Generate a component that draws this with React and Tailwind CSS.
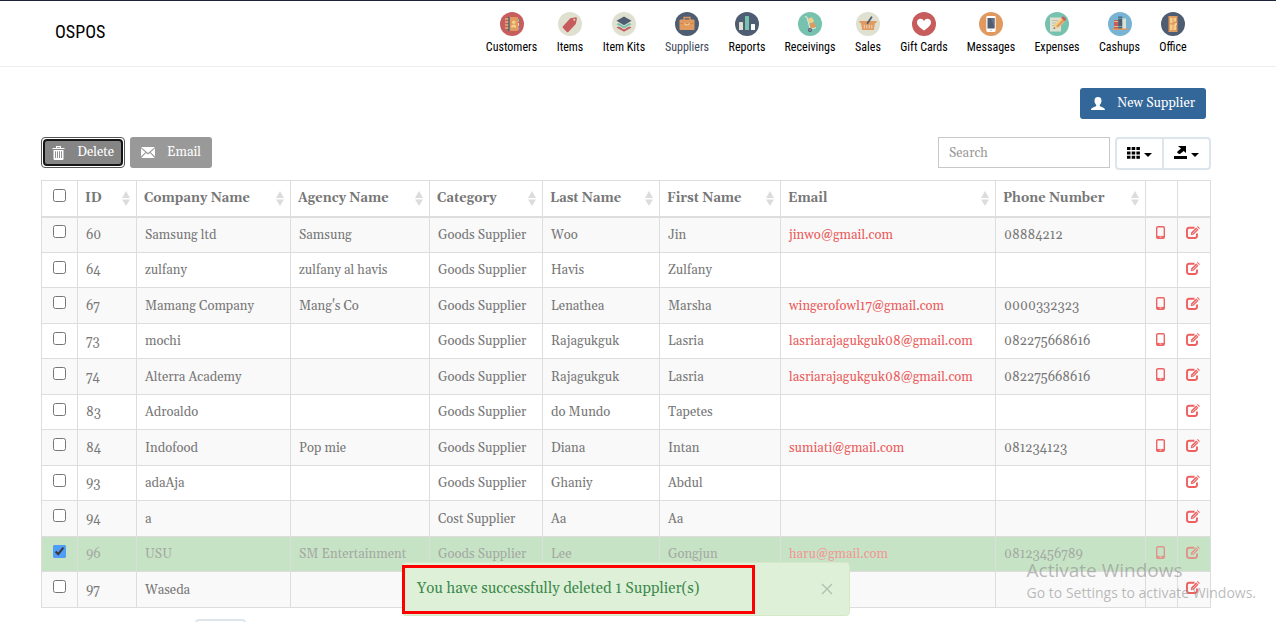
import React, { useState } from "react";

function Disc({ color, children }) {
  return (
    <svg viewBox="0 0 24 24" className="block size-6" aria-hidden="true">
      <circle cx="12" cy="12" r="12" fill={color} />
      {children}
    </svg>
  );
}

const icons = {
  customers: (
    <Disc color="#c85d5d">
      <rect x="17" y="7" width="2" height="3" fill="#76c2af" />
      <rect x="17" y="11" width="2" height="3" fill="#e0e0d1" />
      <rect x="17" y="15" width="2" height="3" fill="#77b3d4" />
      <rect x="7" y="5" width="11" height="14" rx="1" fill="#e0995e" />
      <rect x="7.500" y="5" width="2.200" height="14" fill="#4f5d73" />
      <path d="M5 7h3.500M5 10h3.500M5 13h3.500M5 16h3.500" stroke="#f5cf87" strokeWidth="1.200" />
      <circle cx="13.800" cy="10.200" r="1.800" fill="#f5cf87" />
      <path d="M11 15.500c0-4 5.500-4 5.500 0z" fill="#f5cf87" />
    </Disc>
  ),
  items: (
    <Disc color="#e0e0d1">
      <path d="M5 14.200 12.300 6.300l5.900-1.100.8 1-1.200 5.700-7.500 8q-.8.6-1.500 0L5 16q-.8-.9 0-1.800z" fill="#c75c5c" />
      <circle cx="16.300" cy="7.800" r="1" fill="#e0e0d1" />
    </Disc>
  ),
  kits: (
    <Disc color="#e0e0d1">
      <path d="m4.500 15.500 7.500-4 7.500 4-7.500 4.300z" fill="#c75c5c" />
      <path d="m4.500 13.200 7.500-4.500 7.500 4.500-7.500 4.300z" fill="#e0e0d1" />
      <path d="m4.500 12.300 7.500-4.300 7.500 4.300L12 16.600z" fill="#76c2af" />
      <path d="M4.500 9.700 12 5.300l7.500 4.400L12 14.200z" fill="#e0e0d1" />
      <path d="M4.500 8.800 12 4.400l7.500 4.400L12 13.200z" fill="#4f5d73" />
    </Disc>
  ),
  suppliers: (
    <Disc color="#4f5d73">
      <path d="M9 8V5.500h6V8" fill="none" stroke="#e0995e" strokeWidth="1.300" />
      <rect x="4.500" y="7.500" width="15" height="10.500" rx="1" fill="#e0995e" />
      <path d="M4.500 11.500h15" stroke="#c88248" strokeWidth=".7" />
      <path d="M9.500 11.200q.5 1.800 2.500 1.800t2.500-1.800" fill="none" stroke="#f5cf87" strokeWidth="1.200" />
    </Disc>
  ),
  reports: (
    <Disc color="#4f5d73">
      <rect x="4" y="10" width="4" height="8" rx=".6" fill="#e0e0d1" />
      <rect x="10" y="4" width="4" height="14" rx=".6" fill="#76c2af" />
      <rect x="16" y="12" width="4" height="6" rx=".6" fill="#fff" />
    </Disc>
  ),
  receivings: (
    <Disc color="#76c2af">
      <path d="m9.800 6.800 4.400-1.500 1.800 4.500-4.400 1.800z" fill="#f5cf87" />
      <path d="m11.500 12 4.500-1.800 2.200 4.600-5 2z" fill="#e0995e" />
      <path d="M6.800 4.800h2l3.400 12.400 5.800-1.500" fill="none" stroke="#f0ead8" strokeWidth="1" />
      <circle cx="12" cy="18" r="2" fill="#4f5d73" />
      <circle cx="12" cy="18" r=".7" fill="#e0e0d1" />
    </Disc>
  ),
  sales: (
    <Disc color="#e0e0d1">
      <path d="M3.500 9h17v2h-17zM5 11h14l-1.200 7H6.200z" fill="#e0995e" />
      <path d="M8.300 12.800v3.700M10.800 12.800v3.700M13.300 12.800v3.700M15.800 12.800v3.700" stroke="#f3dcc0" strokeWidth=".9" />
      <path d="m11.500 11.200 4-6" stroke="#4f5d73" strokeWidth="1.800" strokeLinecap="round" />
    </Disc>
  ),
  gift: (
    <Disc color="#c75c5c">
      <path d="M12 18.500C8 16 5 13.500 5 10.300 5 6.500 10 5.500 12 9c2-3.500 7-2.500 7 1.300 0 3.200-3 5.700-7 8.200z" fill="#fff" />
    </Disc>
  ),
  messages: (
    <Disc color="#e0995e">
      <rect x="7.300" y="4" width="9.400" height="16" rx="1.400" fill="#fff" />
      <path d="M8.500 6h7v10.500h-7z" fill="#4f5d73" />
      <path d="M12 6h3.500v10.500z" fill="#657188" />
      <path d="M11 18.300h2" stroke="#c9c9bf" strokeWidth="1" />
    </Disc>
  ),
  expenses: (
    <Disc color="#76c2af">
      <path d="M5 5.500h11v14H5z" fill="#e0e0d1" />
      <path d="M7 8.500h6M7 11h5M7 13.500h3" stroke="#b7b8a9" strokeWidth=".8" />
      <path d="m8.800 16.800.8-4.500L17.200 5l3.500 3.500-7.500 7.400z" fill="#f5cf87" />
      <path d="m11.200 14 6.700-6.800 1.600 1.700-6.600 6.700z" fill="#e0995e" />
      <path d="m16.200 6 1.200-1.200q1-.7 2.500.6t1 2.600L19.700 9.300z" fill="#c75c5c" />
      <path d="m8.500 17 .4-2 1.500 1.500z" fill="#4f5d73" />
    </Disc>
  ),
  cashups: (
    <Disc color="#77b3d4">
      <path d="M6 8h4v9H6z" fill="#c75c5c" />
      <path d="M6 9.500h4M6 14.500h4" stroke="#f5cf87" strokeWidth=".8" />
      <path d="M10.200 4.500h4V17h-4z" fill="#4f5d73" />
      <path d="M10.200 6.300h4M10.200 14.500h4" stroke="#76c2af" strokeWidth=".8" />
      <path d="M14.500 6.500H18V17h-3.500z" fill="#e0e0d1" />
      <path d="M4.500 17.200h15" stroke="#e0995e" strokeWidth="1.500" />
    </Disc>
  ),
  office: (
    <Disc color="#4f5d73">
      <rect x="7.500" y="4" width="9" height="16" fill="#e0995e" />
      <path d="M9 5.800h2.500V11H9zm3.500 0H15v3.700h-2.500zM9 12.500h2.500V18H9zm3.500 0H15V18h-2.500z" fill="#f5cf87" />
      <circle cx="15" cy="12" r=".8" fill="#fff" />
    </Disc>
  ),
};

const nav = [
  ["Customers", "customers", "w-[71px]"],
  ["Items", "items", "w-[46px]"],
  ["Item Kits", "kits", "w-[62px]"],
  ["Suppliers", "suppliers", "w-[64px]"],
  ["Reports", "reports", "w-[56px]"],
  ["Receivings", "receivings", "w-[70px]"],
  ["Sales", "sales", "w-[46px]"],
  ["Gift Cards", "gift", "w-[66px]"],
  ["Messages", "messages", "w-[68px]"],
  ["Expenses", "expenses", "w-[64px]"],
  ["Cashups", "cashups", "w-[61px]"],
  ["Office", "office", "w-[46px]"],
];

const columns = [
  ["ID", "w-[59px]"],
  ["Company Name", "w-[154px]"],
  ["Agency Name", "w-[139px]"],
  ["Category", "w-[113px]"],
  ["Last Name", "w-[117px]"],
  ["First Name", "w-[121px]"],
  ["Email", ""],
  ["Phone Number", "w-[150px]"],
];

const suppliers = [
  ["60", "Samsung ltd", "Samsung", "Goods Supplier", "Woo", "Jin", "jinwo@gmail.com", "08884212"],
  ["64", "zulfany", "zulfany al havis", "Goods Supplier", "Havis", "Zulfany", "", ""],
  ["67", "Mamang Company", "Mang's Co", "Goods Supplier", "Lenathea", "Marsha", "wingerofowl17@gmail.com", "0000332323"],
  ["73", "mochi", "", "Goods Supplier", "Rajagukguk", "Lasria", "lasriarajagukguk08@gmail.com", "082275668616"],
  ["74", "Alterra Academy", "", "Goods Supplier", "Rajagukguk", "Lasria", "lasriarajagukguk08@gmail.com", "082275668616"],
  ["83", "Adroaldo", "", "Goods Supplier", "do Mundo", "Tapetes", "", ""],
  ["84", "Indofood", "Pop mie", "Goods Supplier", "Diana", "Intan", "sumiati@gmail.com", "081234123"],
  ["93", "adaAja", "", "Goods Supplier", "Ghaniy", "Abdul", "", ""],
  ["94", "a", "", "Cost Supplier", "Aa", "Aa", "", ""],
  ["96", "USU", "SM Entertainment", "Goods Supplier", "Lee", "Gongjun", "haru@gmail.com", "08123456789"],
  ["97", "Waseda", "", "", "", "", "", ""],
];

function SortArrows() {
  return (
    <svg viewBox="0 0 8 15" className="h-[15px] w-2 shrink-0 fill-[#dcdcdc]" aria-hidden="true">
      <path d="M4 0 8 7H0zM0 8.500h8L4 15z" />
    </svg>
  );
}

function TrashIcon() {
  return (
    <svg viewBox="0 0 14 14" className="size-3.5" aria-hidden="true">
      <path d="M4.500 2V.6h4V2M.5 2.500h12" fill="none" stroke="#fff" strokeWidth="1.100" />
      <path d="M1.500 4h10v9q0 1-1 1h-8q-1 0-1-1z" fill="#fff" />
      <path d="M3.500 5.300V12M5.500 5.300V12M7.500 5.300V12M9.500 5.300V12" stroke="#858585" strokeWidth=".9" />
    </svg>
  );
}

function EnvelopeIcon() {
  return (
    <svg viewBox="0 0 14 11" className="h-[11px] w-3.5" fill="#fff" aria-hidden="true">
      <path d="M0 0h14L7 6zM0 1.200 4.300 5.200 0 9.500zM14 1.200 9.700 5.200 14 9.500zM5 5.900l2 1.700 2-1.700L13.700 11H.3z" />
    </svg>
  );
}

function UserIcon() {
  return (
    <svg viewBox="0 0 14 13" className="h-[13px] w-3.5" fill="#fff" aria-hidden="true">
      <path d="M7 0c2.600 0 3.500 1.600 3.500 3.700 0 1.800-.7 3.100-1.700 4v1c0 1.200 5.200 1.300 5.200 4.300H0c0-3 5.200-3.100 5.200-4.300v-1c-1-.9-1.700-2.200-1.700-4C3.500 1.600 4.400 0 7 0z" />
    </svg>
  );
}

function PhoneIcon() {
  return (
    <svg viewBox="0 0 9 13" className="h-[13px] w-[9px]" aria-hidden="true">
      <rect x=".7" y=".7" width="7.600" height="11.600" rx="1.300" fill="none" stroke="#ee6363" strokeWidth="1.400" />
      <path d="M1 10.900h7" stroke="#ee6363" strokeWidth="2" />
      <path d="M3.600 11h1.800" stroke="#fff" strokeWidth=".8" />
    </svg>
  );
}

function EditIcon() {
  return (
    <svg viewBox="0 0 14 13" className="h-[13px] w-3.5" aria-hidden="true">
      <path d="M8.500 1.800H3.300Q1 1.800 1 4v5.800Q1 12 3.300 12h5.400Q11 12 11 9.800V7.500" fill="none" stroke="#ee5f5f" strokeWidth="1.900" />
      <path d="m4.800 9.200.6-3L10.200 1.500l2.300 2.300L7.700 8.600z" fill="#ee5f5f" />
      <path d="m11 .8.7-.7 2.200 2.200-.7.7z" fill="#ee5f5f" />
      <path d="M6.500 7.700 11 3.200" stroke="#fff" strokeWidth=".7" />
    </svg>
  );
}

function Caret() {
  return (
    <svg viewBox="0 0 8 4" className="mt-1 h-1 w-2" aria-hidden="true">
      <path d="M0 0h8L4 4z" />
    </svg>
  );
}

function Header() {
  return (
    <header className="flex h-[67px] items-start justify-between border-t border-b border-t-[#1b2438] border-b-[#eeeeee] pr-20 pl-[55px] font-['Roboto_Condensed','Roboto',sans-serif] text-black">
      <a href="#home" className="pt-[18px] text-[18px] leading-[26px]">OSPOS</a>
      <nav className="flex pt-[11px]">
        {nav.map(([label, icon, width]) => (
          <a key={label} href={"#" + icon} className={width + " flex flex-col items-center"}>
            {icons[icon]}
            <span className={"mt-0.5 text-[12px] leading-[18px] whitespace-nowrap " + (icon === "suppliers" ? "text-[#3e4a5c]" : "")}>{label}</span>
          </a>
        ))}
      </nav>
    </header>
  );
}

function Toolbar() {
  return (
    <div className="mt-[18px] flex items-start justify-between">
      <div className="flex gap-[5px] text-[13px] text-white">
        <button type="button" className="flex h-[31px] w-[84px] rounded-[4px] border border-[#555] bg-white p-px">
          <span className="flex h-[27px] w-full items-center justify-between rounded-[4px] border-2 border-[#151515] bg-[#858585] px-[7px]">
            <TrashIcon />
            Delete
          </span>
        </button>
        <button type="button" className="flex h-[31px] w-[82px] items-center justify-between rounded-[3px] bg-[#999] px-[11px]">
          <EnvelopeIcon />
          Email
        </button>
      </div>
      <div className="flex gap-[5px]">
        <input
          type="text"
          aria-label="Search"
          placeholder="Search"
          className="h-[31px] w-[172px] border border-[#c8c8c8] bg-white px-2.5 text-[13px] outline-none placeholder:text-[#999]"
        />
        <div className="flex h-[33px] w-[96px] rounded-[4px] border-2 border-[#dce4ec] bg-white">
          <button type="button" aria-label="Columns" className="flex flex-1 items-center justify-center gap-1 border-r-2 border-[#dce4ec] pb-0.5">
            <svg viewBox="0 0 13 12" className="h-3 w-[13px]" aria-hidden="true">
              <path d="M0 0h3.500v3H0zM4.700 0h3.500v3H4.700zM9.400 0h3.500v3H9.400zM0 4.400h3.500v3H0zM4.700 4.400h3.500v3H4.700zM9.400 4.400h3.500v3H9.400zM0 8.800h3.500v3H0zM4.700 8.800h3.500v3H4.700zM9.400 8.800h3.500v3H9.400z" />
            </svg>
            <Caret />
          </button>
          <button type="button" aria-label="Export" className="flex flex-1 items-center justify-center gap-1 pb-0.5">
            <svg viewBox="0 0 13 13" className="size-[13px]" aria-hidden="true">
              <path d="M4 0h8v7L9.700 5 6 8Q3.500 8 3 6l4-3.500zM0 10h13v3H0z" />
            </svg>
            <Caret />
          </button>
        </div>
      </div>
    </div>
  );
}

const cell = "border border-[#ddd] px-2 py-0 whitespace-nowrap";
const iconCell = "border border-[#ddd] py-0 pr-0.5";

function SupplierTable() {
  const [selected, setSelected] = useState(["96"]);
  const toggle = (id) =>
    setSelected((now) => (now.includes(id) ? now.filter((x) => x !== id) : [...now, id]));
  const all = selected.length === suppliers.length;

  return (
    <table className="mt-[10px] w-full table-fixed border-collapse text-left text-[13px] leading-5 oldstyle-nums">
      <thead>
        <tr className="h-9">
          <th className={cell + " w-9 border-b-2"}>
            <input
              type="checkbox"
              aria-label="Select all"
              checked={all}
              onChange={() => setSelected(all ? [] : suppliers.map((s) => s[0]))}
              className="mx-auto -mt-1.5 block size-[13px]"
            />
          </th>
          {columns.map(([label, width]) => (
            <th key={label} className={"border border-b-2 border-[#ddd] py-0 pr-1.5 pl-[7px] whitespace-nowrap " + width}>
              <div className="flex items-center justify-between">
                {label}
                <SortArrows />
              </div>
            </th>
          ))}
          <th className={iconCell + " w-8 border-b-2"} aria-label="Message" />
          <th className={iconCell + " w-[33px] border-b-2"} aria-label="Edit" />
        </tr>
      </thead>
      <tbody>
        {suppliers.map((row) => {
          const on = selected.includes(row[0]);
          return (
            <tr key={row[0]} className={"h-9 even:h-[35px] " + (on ? "bg-[#c7e3c5] text-[#a4a9a3]" : "odd:bg-[#f9f9f9]")}>
              <td className={cell}>
                <input
                  type="checkbox"
                  aria-label={"Select supplier " + row[0]}
                  checked={on}
                  onChange={() => toggle(row[0])}
                  className="mx-auto -mt-1.5 block size-[13px] accent-[#4f9cf9]"
                />
              </td>
              {row.map((value, i) => (
                <td key={i} className={cell}>
                  {i === 6 && value ? (
                    <a href={"mailto:" + value} className={on ? "text-[#f09896]" : "text-[#ea5b5b]"}>{value}</a>
                  ) : (
                    value
                  )}
                </td>
              ))}
              <td className={iconCell}>
                {row[7] && (
                  <a href={"#message-" + row[0]} aria-label="Send message" className={"-mt-1 flex justify-center " + (on ? "opacity-60" : "")}>
                    <PhoneIcon />
                  </a>
                )}
              </td>
              <td className={iconCell}>
                <a href={"#edit-" + row[0]} aria-label="Edit supplier" className={"-mt-1 flex justify-center " + (on ? "opacity-60" : "")}>
                  <EditIcon />
                </a>
              </td>
            </tr>
          );
        })}
      </tbody>
    </table>
  );
}

export default function App() {
  return (
    <div className="relative h-screen overflow-hidden bg-white font-['Gelasio','Liberation_Serif',serif] text-[#777]">
      <Header />
      <main className="pr-[65px] pl-[41px]">
        <div className="flex justify-end pt-[21px] pr-[5px]">
          <button type="button" className="flex h-[31px] w-[126px] items-center justify-between rounded-[3px] bg-[#336699] px-[11px] text-[13px] text-white">
            <UserIcon />
            New Supplier
          </button>
        </div>
        <Toolbar />
        <SupplierTable />
        <div className="mt-[11px] pl-[154px]">
          <button type="button" aria-label="Rows per page" className="h-8 w-[51px] rounded-[4px] border-2 border-[#dce4ec] bg-white" />
        </div>
      </main>

      <div role="status" className="absolute bottom-1.5 left-[402px] flex h-[54px] w-[448px] items-center justify-between rounded-[4px] border border-[#d6e9c6] bg-[#dff0d8] pr-[15px] text-[#3c8a4c]">
        <span className="-ml-px flex h-[49px] w-[353px] items-center border-3 border-[#ff0000] pl-3 text-[15px] oldstyle-nums">
          You have successfully deleted 1 Supplier(s)
        </span>
        <button type="button" aria-label="Close" className="p-px">
          <svg viewBox="0 0 12 12" className="size-3" aria-hidden="true">
            <path d="m1 1 10 10M11 1 1 11" stroke="#b2c0ad" strokeWidth="1.400" />
          </svg>
        </button>
      </div>

      <div className="pointer-events-none absolute right-5 bottom-[19px] font-['Open_Sans',sans-serif] text-[#8e8e8e]/60">
        <p className="text-[19px] leading-[26px]">Activate Windows</p>
        <p className="text-[14px] leading-5">Go to Settings to activate Windows.</p>
      </div>
    </div>
  );
}
